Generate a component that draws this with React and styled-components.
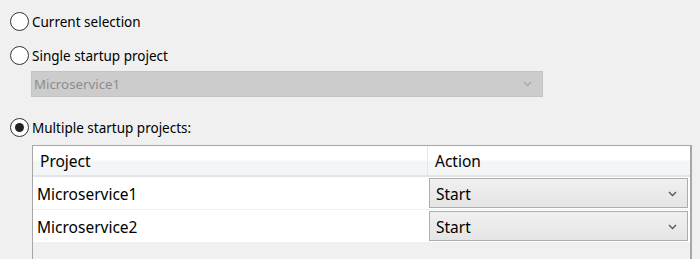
import React from 'react';
import styled, { createGlobalStyle } from 'styled-components';

const GlobalStyle = createGlobalStyle`
    body {
        margin: 0;
        background: #f0f0f0;
        font-family: "Noto Sans", "Open Sans", sans-serif;
        color: #000;
    }
`

const Page = styled.div`
    padding: 12px 0 0 10px;
    height: 259px;
    box-sizing: border-box;
    overflow: hidden;
`
const RadioRow = styled.div`
    display: flex;
    align-items: center;
    gap: 3px;
    height: 19px;
    margin-top: ${p => p.top || 0}px;
    font-size: 13.5px;
`
const Circle = styled.div`
    width: 19px;
    height: 19px;
    box-sizing: border-box;
    border: 1.5px solid #333;
    border-radius: 50%;
    background: #fff;
    display: flex;
    align-items: center;
    justify-content: center;
`
const Dot = styled.div`
    width: 9px;
    height: 9px;
    border-radius: 50%;
    background: #222;
`
const DisabledCombo = styled.div`
    margin: 6px 0 0 21px;
    width: 512px;
    height: 26px;
    box-sizing: border-box;
    background: #cccccc;
    border: 1px solid #c4c4c4;
    display: flex;
    align-items: center;
    justify-content: space-between;
    padding: 0 10px 0 2px;
    font-size: 13.3px;
    color: #8d8d8d;
`
const Table = styled.div`
    margin: 8px 0 0 22px;
    width: 660px;
    height: 130px;
    box-sizing: border-box;
    border: 1px solid #a6a6a6;
    border-right-width: 2px;
    display: grid;
    grid-template-columns: 395px 1fr;
    grid-auto-rows: min-content;
    font-size: 15.5px;
`
const HeaderCell = styled.div`
    height: 31px;
    box-sizing: border-box;
    background: linear-gradient(#ffffff 0%, #ffffff 45%, #f4f5f6 55%, #f4f5f6 100%);
    border-bottom: 2px solid #e3e4e5;
    border-right: ${p => p.last ? 'none' : '1px solid #e6e6e6'};
    display: flex;
    align-items: center;
    padding: 1px 0 0 7px;
`
const Cell = styled.div`
    height: 33px;
    box-sizing: border-box;
    background: #fff;
    border-bottom: 1px solid #f0f0f0;
    display: flex;
    align-items: center;
    padding: ${p => p.combo ? '1px 2px 1px 1px' : '2px 0 0 4px'};
`
const Combo = styled.div`
    flex: 1;
    height: 30px;
    box-sizing: border-box;
    background: linear-gradient(#f0f0f0, #e5e5e5);
    border: 1px solid #adadad;
    display: flex;
    align-items: center;
    justify-content: space-between;
    padding: 2px 10px 0 6px;
`

const Chevron = ({ color }) => (
    <svg width="9" height="6" viewBox="0 0 9 6">
        <path d="M1 1 L4.5 4.5 L8 1" fill="none" stroke={color} strokeWidth="1.3" />
    </svg>
)

const rows = ['Microservice1', 'Microservice2']

const App = () => {
    return (
        <Page>
            <GlobalStyle />
            <RadioRow>
                <Circle />
                Current selection
            </RadioRow>
            <RadioRow top={15}>
                <Circle />
                Single startup project
            </RadioRow>
            <DisabledCombo>
                Microservice1
                <Chevron color="#a8a8a8" />
            </DisabledCombo>
            <RadioRow top={21}>
                <Circle><Dot /></Circle>
                Multiple startup projects:
            </RadioRow>
            <Table>
                <HeaderCell>Project</HeaderCell>
                <HeaderCell last>Action</HeaderCell>
                {rows.map(name => (
                    <React.Fragment key={name}>
                        <Cell>{name}</Cell>
                        <Cell combo>
                            <Combo>
                                Start
                                <Chevron color="#555" />
                            </Combo>
                        </Cell>
                    </React.Fragment>
                ))}
            </Table>
        </Page>
    )
}
export default App;
